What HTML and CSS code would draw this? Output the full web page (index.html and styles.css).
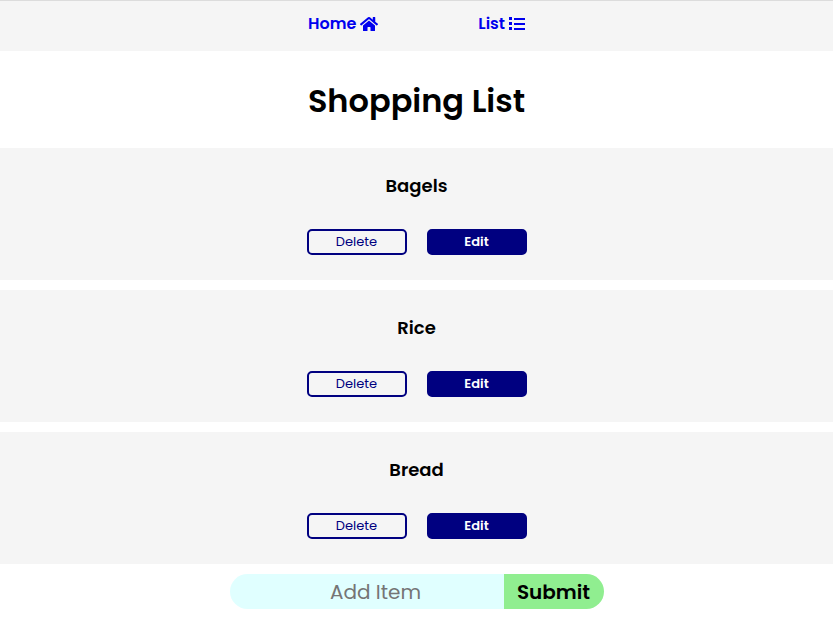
FILE: index.html
```html
<!DOCTYPE html>
<html lang="en">
<head>
  <meta charset="utf-8">
  <meta name="viewport" content="width=device-width, initial-scale=1">
  <title>Shopping List</title>
  <link rel="stylesheet" href="styles.css">
</head>
<body>
  <nav class="nav">
    <a class="nav-link" href="#home">Home
      <svg class="icon-home" viewBox="0 0 576 512" aria-hidden="true"><path d="M280.37 148.26L96 300.11V464a16 16 0 0 0 16 16l112.06-.29a16 16 0 0 0 15.92-16V368a16 16 0 0 1 16-16h64a16 16 0 0 1 16 16v95.64a16 16 0 0 0 16 16.05L464 480a16 16 0 0 0 16-16V300L295.67 148.26a12.19 12.19 0 0 0-15.3 0zM571.6 251.47L488 182.56V44.05a12 12 0 0 0-12-12h-56a12 12 0 0 0-12 12v72.61L318.47 43a48 48 0 0 0-61 0L4.34 251.47a12 12 0 0 0-1.6 16.9l25.5 31A12 12 0 0 0 45.15 301l235.22-193.74a12.19 12.19 0 0 1 15.3 0L530.9 301a12 12 0 0 0 16.9-1.6l25.5-31a12 12 0 0 0-1.7-16.93z"/></svg>
    </a>
    <a class="nav-link" href="#list">List
      <svg class="icon-list" viewBox="0 0 16 16" aria-hidden="true"><path d="M0 1h3v3H0zM0 6h3v3H0zM0 11h3v3H0zM5 2h11v2H5zM5 7h11v2H5zM5 12h11v2H5z"/></svg>
    </a>
  </nav>

  <main>
    <h1 class="title">Shopping List</h1>
    <ul class="items">
      <li class="item">
        <h2 class="item-name">Bagels</h2>
        <div class="actions">
          <button class="button" type="button">Delete</button>
          <button class="button button-edit" type="button">Edit</button>
        </div>
      </li>
      <li class="item">
        <h2 class="item-name">Rice</h2>
        <div class="actions">
          <button class="button" type="button">Delete</button>
          <button class="button button-edit" type="button">Edit</button>
        </div>
      </li>
      <li class="item">
        <h2 class="item-name">Bread</h2>
        <div class="actions">
          <button class="button" type="button">Delete</button>
          <button class="button button-edit" type="button">Edit</button>
        </div>
      </li>
    </ul>
    <form class="add-form">
      <input class="add-input" type="text" placeholder="Add Item" aria-label="Add Item">
      <button class="add-submit" type="submit">Submit</button>
    </form>
  </main>
</body>
</html>
```

FILE: styles.css
```css
* {
  box-sizing: border-box;
}

body {
  margin: 0;
  background: #fff;
  color: #000;
  font-family: Poppins, Inter, "Open Sans", sans-serif;
}

.nav {
  display: flex;
  justify-content: center;
  gap: 100px;
  padding: 11px 0 15px;
  border-top: 1px solid #dcdcdc;
  background: whitesmoke;
}

.nav-link {
  display: flex;
  align-items: center;
  gap: 4px;
  color: #00e;
  font-size: 16px;
  font-weight: 600;
  line-height: 24px;
  text-decoration: none;
}

.nav-link svg {
  height: 16px;
  fill: currentColor;
}

.icon-home {
  width: 18px;
}

.icon-list {
  width: 16px;
}

.title {
  margin: 0;
  padding: 26px 0 23px;
  font-size: 32px;
  font-weight: 600;
  line-height: 48px;
  text-align: center;
}

.items {
  display: flex;
  flex-direction: column;
  gap: 10px;
  margin: 0;
  padding: 0;
  list-style: none;
}

.item {
  padding: 24px 0 25px;
  background: whitesmoke;
  text-align: center;
}

.item-name {
  margin: 0 0 29px;
  font-size: 18px;
  font-weight: 600;
  line-height: 28px;
}

.actions {
  display: flex;
  justify-content: center;
  gap: 20px;
}

.button {
  width: 100px;
  height: 26px;
  padding: 0;
  border: 2px solid navy;
  border-radius: 5px;
  background: transparent;
  color: navy;
  font-family: inherit;
  font-size: 13px;
  line-height: 20px;
}

.button-edit {
  background: navy;
  color: #fff;
  font-weight: 600;
}

.add-form {
  display: flex;
  justify-content: center;
  margin: 10px 0;
}

.add-input {
  width: 274px;
  height: 35px;
  padding: 0 0 0 18px;
  border: 0;
  border-radius: 20px 0 0 20px;
  background: lightcyan;
  font-family: inherit;
  font-size: 20px;
  text-align: center;
}

.add-input::placeholder {
  color: #757575;
}

.add-submit {
  width: 100px;
  height: 35px;
  padding: 0;
  border: 0;
  border-radius: 0 20px 20px 0;
  background: lightgreen;
  color: #000;
  font-family: inherit;
  font-size: 20px;
  font-weight: 600;
}
```
